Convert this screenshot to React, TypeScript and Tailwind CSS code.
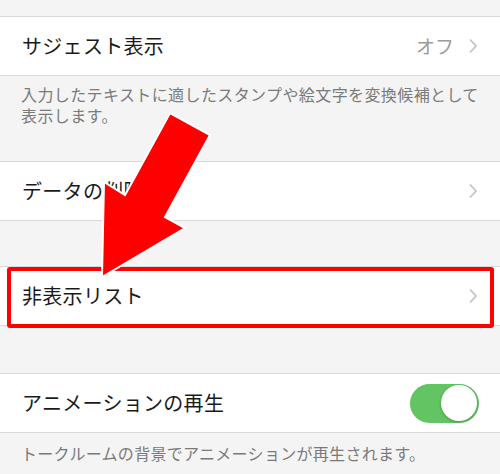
const font = { fontFamily: '"Noto Sans CJK JP", "Noto Sans", sans-serif' };

function Chevron() {
  return (
    <svg width="10" height="16" viewBox="0 0 10 16" className="shrink-0">
      <path d="M2 1.5 L8 8 L2 14.5" fill="none" stroke="#c4c4c8" strokeWidth="1.8" />
    </svg>
  );
}

function Row({ label, children }: { label: string; children?: React.ReactNode }) {
  return (
    <div className="h-[59px] bg-white border-b border-[#d9d9d9] flex items-center justify-between pl-[22px] pr-[22px]">
      <span className="text-[20px] text-[#1a1a1a] tracking-[0.3px]">{label}</span>
      <div className="flex items-center gap-[14px]">{children}</div>
    </div>
  );
}

export default function App() {
  return (
    <div className="relative w-[500px] h-[474px] overflow-hidden bg-[#f4f4f4]" style={font}>
      <div className="h-[17px] border-b border-[#d9d9d9]" />
      <Row label="サジェスト表示">
        <span className="text-[19px] text-[#9a9a9a]">オフ</span>
        <Chevron />
      </Row>
      <div className="h-[86px] pl-[21px] pt-[8px] text-[16px] leading-[21px] text-[#7a7a7a] tracking-[0.4px] whitespace-nowrap border-b border-[#d9d9d9]">
        <div>入力したテキストに適したスタンプや絵文字を変換候補として</div>
        <div>表示します。</div>
      </div>
      <Row label="データの削除">
        <Chevron />
      </Row>
      <div className="h-[46px] border-b border-[#d9d9d9]" />
      <Row label="非表示リスト">
        <Chevron />
      </Row>
      <div className="h-[48px] border-b border-[#d9d9d9]" />
      <Row label="アニメーションの再生">
        <div className="w-[69px] h-[39px] rounded-full bg-[#62c462] flex items-center justify-end pr-[2px] -mr-[1px]">
          <div className="w-[36px] h-[36px] rounded-full bg-white shadow-[0_1px_3px_rgba(0,0,0,0.25)]" />
        </div>
      </Row>
      <div className="pl-[21px] pt-[11px] text-[16px] leading-[19px] text-[#7a7a7a] tracking-[0.3px] whitespace-nowrap">
        トークルームの背景でアニメーションが再生されます。
      </div>

      {/* annotation: red frame */}
      <div className="absolute left-[7px] top-[267px] w-[487px] h-[61px] border-[4px] border-[#ff0000] rounded-[3px]" />

      {/* annotation: arrow */}
      <svg className="absolute left-0 top-0" width="500" height="474" viewBox="0 0 500 474">
        <polygon
          points="170,113 210,135 165,217 185,228 102,277 104,182 125,195"
          fill="#ff0000"
          stroke="#ffffff"
          strokeWidth="2"
          strokeLinejoin="miter"
        />
      </svg>
    </div>
  );
}
